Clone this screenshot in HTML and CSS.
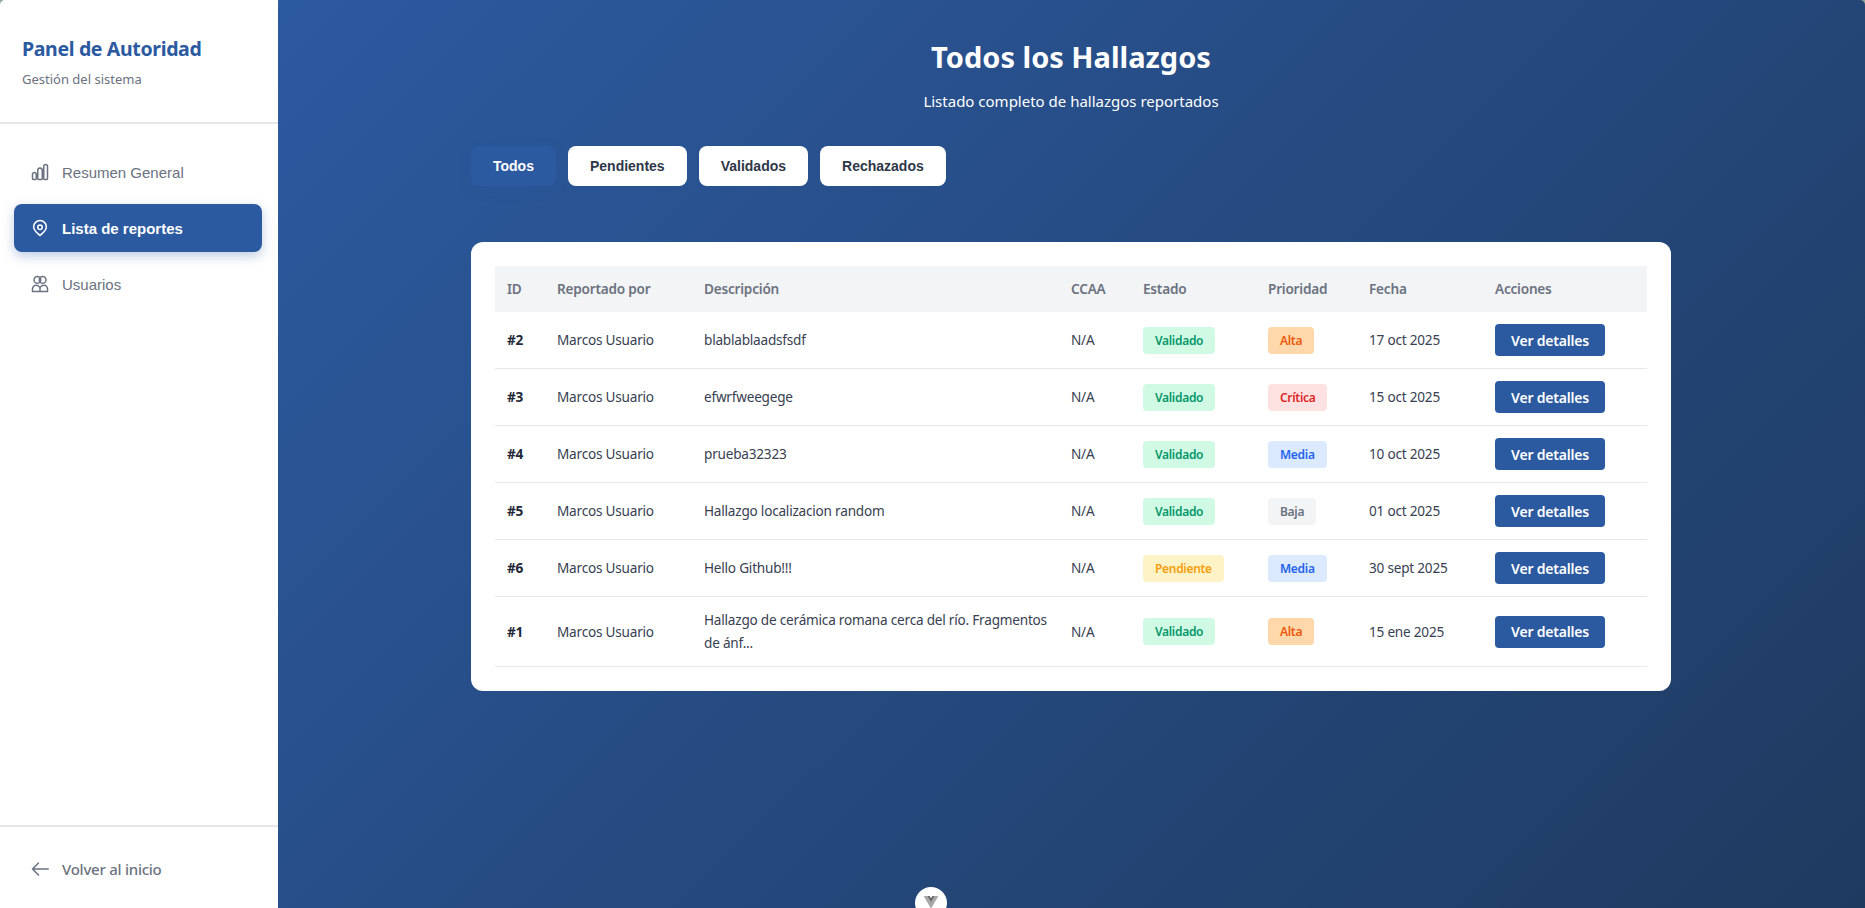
FILE: index.html
```html
<!DOCTYPE html>
<html lang="es">
<head>
    <meta charset="UTF-8">
    <meta name="viewport" content="width=device-width, initial-scale=1.0">
    <title>Todos los Hallazgos</title>
    <link rel="stylesheet" href="styles.css">
</head>
<body>
    <div class="layout">
        <!-- Sidebar -->
        <aside class="sidebar">
            <div class="sidebar-header">
                <h2>Panel de Autoridad</h2>
                <p>Gestión del sistema</p>
            </div>
            <nav class="sidebar-nav">
                <a class="nav-item" href="#">
                    <svg class="nav-icon" viewBox="0 0 24 24"><path d="M2 15a2.500 2.500 0 0 1 5 0v5.500a1.500 1.500 0 0 1-1.500 1.500h-2A1.500 1.500 0 0 1 2 20.500zM9 9.500a3 3 0 0 1 6 0v11a1.500 1.500 0 0 1-1.500 1.500h-3A1.500 1.500 0 0 1 9 20.500zM17 4.500a2.500 2.500 0 0 1 5 0v16a1.500 1.500 0 0 1-1.500 1.500h-2a1.500 1.500 0 0 1-1.500-1.500z"/></svg>
                    Resumen General
                </a>
                <a class="nav-item active" href="#">
                    <svg class="nav-icon" viewBox="0 0 24 24"><circle cx="12" cy="11" r="3"/><path d="M12 2a8.500 8.500 0 0 1 8.500 8.500c0 4.500-4 7.500-8.500 11.500c-4.500-4-8.500-7-8.500-11.500A8.500 8.500 0 0 1 12 2z"/></svg>
                    Lista de reportes
                </a>
                <a class="nav-item" href="#">
                    <svg class="nav-icon" viewBox="0 0 24 24"><circle cx="8.500" cy="6.500" r="4.500"/><circle cx="15.500" cy="6.500" r="4.500"/><path d="M2 22v-3.500a5 5 0 0 1 5-5c2.500 0 4 1.500 5 3.500c1-2 2.500-3.500 5-3.500a5 5 0 0 1 5 5V22zM12 16.500V22"/></svg>
                    Usuarios
                </a>
            </nav>
            <div class="sidebar-footer">
                <a class="back-link" href="#">
                    <svg class="nav-icon" viewBox="0 0 24 24"><path d="M23 12H2M10 4l-8 8 8 8"/></svg>
                    Volver al inicio
                </a>
            </div>
        </aside>

        <!-- Main content -->
        <main class="main">
            <div class="container">
                <header class="page-header">
                    <h1>Todos los Hallazgos</h1>
                    <p>Listado completo de hallazgos reportados</p>
                </header>

                <div class="filters">
                    <button class="filter-btn active">Todos</button>
                    <button class="filter-btn">Pendientes</button>
                    <button class="filter-btn">Validados</button>
                    <button class="filter-btn">Rechazados</button>
                </div>

                <section class="card">
                    <table class="reports">
                        <colgroup>
                            <col class="col-id"><col class="col-user"><col class="col-desc"><col class="col-ccaa">
                            <col class="col-state"><col class="col-prio"><col class="col-date"><col>
                        </colgroup>
                        <thead>
                            <tr>
                                <th>ID</th><th>Reportado por</th><th>Descripción</th><th>CCAA</th>
                                <th>Estado</th><th>Prioridad</th><th>Fecha</th><th>Acciones</th>
                            </tr>
                        </thead>
                        <tbody>
                            <tr>
                                <td class="id">#2</td><td>Marcos Usuario</td><td class="desc">blablablaadsfsdf</td><td>N/A</td>
                                <td><span class="badge validado">Validado</span></td>
                                <td><span class="badge alta">Alta</span></td>
                                <td>17 oct 2025</td>
                                <td><button class="details-btn">Ver detalles</button></td>
                            </tr>
                            <tr>
                                <td class="id">#3</td><td>Marcos Usuario</td><td class="desc">efwrfweegege</td><td>N/A</td>
                                <td><span class="badge validado">Validado</span></td>
                                <td><span class="badge critica">Crítica</span></td>
                                <td>15 oct 2025</td>
                                <td><button class="details-btn">Ver detalles</button></td>
                            </tr>
                            <tr>
                                <td class="id">#4</td><td>Marcos Usuario</td><td class="desc">prueba32323</td><td>N/A</td>
                                <td><span class="badge validado">Validado</span></td>
                                <td><span class="badge media">Media</span></td>
                                <td>10 oct 2025</td>
                                <td><button class="details-btn">Ver detalles</button></td>
                            </tr>
                            <tr>
                                <td class="id">#5</td><td>Marcos Usuario</td><td class="desc">Hallazgo localizacion random</td><td>N/A</td>
                                <td><span class="badge validado">Validado</span></td>
                                <td><span class="badge baja">Baja</span></td>
                                <td>01 oct 2025</td>
                                <td><button class="details-btn">Ver detalles</button></td>
                            </tr>
                            <tr>
                                <td class="id">#6</td><td>Marcos Usuario</td><td class="desc">Hello Github!!!</td><td>N/A</td>
                                <td><span class="badge pendiente">Pendiente</span></td>
                                <td><span class="badge media">Media</span></td>
                                <td>30 sept 2025</td>
                                <td><button class="details-btn">Ver detalles</button></td>
                            </tr>
                            <tr>
                                <td class="id">#1</td><td>Marcos Usuario</td><td class="desc">Hallazgo de cerámica romana cerca del río. Fragmentos de ánf...</td><td>N/A</td>
                                <td><span class="badge validado">Validado</span></td>
                                <td><span class="badge alta">Alta</span></td>
                                <td>15 ene 2025</td>
                                <td><button class="details-btn">Ver detalles</button></td>
                            </tr>
                        </tbody>
                    </table>
                </section>
            </div>
        </main>
    </div>

    <!-- Floating devtools button -->
    <div class="devtools-btn">
        <svg viewBox="0 0 24 24"><path class="logo-outer" d="M1 3h5.500L12 12.500 17.500 3H23L12 22z"/><path class="logo-inner" d="M6.500 3h3.500l2 3.500L14 3h3.500L12 12.500z"/></svg>
    </div>
</body>
</html>
```
FILE: styles.css
```css
* {
    box-sizing: border-box;
}
html, body {
    height: 100%;
}
body {
    margin: 0;
    background: #8fa89a;
    font-family: "Noto Sans", "Liberation Sans", sans-serif;
    color: #1f2937;
    overflow: hidden;
}
.layout {
    display: flex;
    height: 100%;
    border-radius: 5px 5px 0 0;
    overflow: hidden;
}

/* Sidebar */
.sidebar {
    width: 278px;
    flex-shrink: 0;
    background: #fff;
    display: flex;
    flex-direction: column;
}
.sidebar-header {
    height: 124px;
    padding: 36px 22px 0;
    border-bottom: 2px solid #e5e7eb;
}
.sidebar-header h2 {
    margin: 0;
    font-size: 19.5px;
    line-height: 26px;
    font-weight: 700;
    letter-spacing: -0.35px;
    color: #2c5aa0;
}
.sidebar-header p {
    margin: 8px 0 0;
    font-size: 13px;
    line-height: 18px;
    color: #6b7280;
}
.sidebar-nav {
    flex: 1;
    padding: 24px 16px 24px 14px;
    display: flex;
    flex-direction: column;
    gap: 8px;
}
.nav-item {
    display: flex;
    align-items: center;
    gap: 13px;
    height: 48px;
    padding: 0 17px;
    border-radius: 8px;
    font-family: "Liberation Sans", Arial, sans-serif;
    font-size: 15px;
    color: #6b7280;
    text-decoration: none;
}
.nav-item.active {
    background: #2c5aa0;
    color: #fff;
    font-weight: 700;
    box-shadow: 0 4px 12px rgba(44, 90, 160, 0.3);
}
.nav-icon {
    width: 18px;
    height: 18px;
    flex-shrink: 0;
    fill: none;
    stroke: currentColor;
    stroke-width: 2;
    stroke-linecap: round;
    stroke-linejoin: round;
}
.sidebar-footer {
    height: 83px;
    padding: 20px 14px 0;
    border-top: 2px solid #e5e7eb;
}
.back-link {
    display: flex;
    align-items: center;
    gap: 13px;
    height: 44px;
    padding: 0 17px;
    font-size: 15px;
    font-weight: 500;
    letter-spacing: -0.25px;
    color: #6b7280;
    text-decoration: none;
}

/* Main area */
.main {
    flex: 1;
    padding-right: 1px;
    background: linear-gradient(135deg, #2c5aa0 0%, #1e3a5f 100%);
}
.container {
    width: 1200px;
    margin: 0 auto;
}
.page-header {
    padding-top: 37px;
    text-align: center;
    color: #fff;
}
.page-header h1 {
    margin: 0;
    font-size: 29px;
    line-height: 40px;
    font-weight: 700;
}
.page-header p {
    margin: 13px 0 0;
    font-size: 15px;
    line-height: 22px;
}
.filters {
    display: flex;
    gap: 12px;
    margin-top: 34px;
}
.filter-btn {
    height: 40px;
    padding: 0 22px;
    border: none;
    border-radius: 8px;
    background: #fff;
    color: #2d3748;
    font-family: "Liberation Sans", Arial, sans-serif;
    font-size: 14px;
    font-weight: 700;
    cursor: pointer;
}
.filter-btn.active {
    background: #2c5aa0;
    color: #fff;
    box-shadow: 0 4px 12px rgba(44, 90, 160, 0.3);
}

/* Table card */
.card {
    margin-top: 56px;
    padding: 24px;
    background: #fff;
    border-radius: 12px;
}
.reports {
    width: 100%;
    table-layout: fixed;
    border-collapse: separate;
    border-spacing: 0;
    font-size: 13.6px;
    line-height: 22.4px;
    letter-spacing: -0.22px;
}
.col-id { width: 50px; }
.col-user { width: 147px; }
.col-desc { width: 367px; }
.col-ccaa { width: 72px; }
.col-state { width: 125px; }
.col-prio { width: 101px; }
.col-date { width: 126px; }
.reports th {
    padding: 12px;
    background: #f3f4f6;
    color: #6b7280;
    font-weight: 600;
    text-align: left;
}
.reports td {
    padding: 12px;
    border-bottom: 1px solid #e5e7eb;
    color: #374151;
}
.reports td.id {
    font-weight: 700;
    color: #1f2937;
}
.reports td.desc {
    padding-right: 4px;
}
.badge {
    display: inline-block;
    padding: 4px 12px;
    border-radius: 4px;
    font-size: 12px;
    line-height: 19.2px;
    font-weight: 600;
    letter-spacing: -0.3px;
    vertical-align: middle;
}
.validado { background: #d1fae5; color: #059669; }
.pendiente { background: #fef3c7; color: #f59e0b; }
.alta { background: #fed7aa; color: #ea580c; }
.critica { background: #fee2e2; color: #dc2626; }
.media { background: #dbeafe; color: #2563eb; }
.baja { background: #f3f4f6; color: #6b7280; }
.details-btn {
    display: block;
    width: 110px;
    height: 32px;
    padding: 0;
    border: none;
    border-radius: 4px;
    background: #2c5aa0;
    color: #fff;
    font-family: "Noto Sans", sans-serif;
    font-size: 14px;
    font-weight: 600;
    letter-spacing: -0.2px;
    cursor: pointer;
}

/* Sits over the page, half off the bottom edge */
.devtools-btn {
    position: fixed;
    left: 915px;
    top: 887px;
    width: 32px;
    height: 32px;
    border-radius: 50%;
    background: #fff;
    display: flex;
    justify-content: center;
    padding-top: 7px;
}
.devtools-btn svg {
    width: 16px;
    height: 16px;
}
.logo-outer { fill: #a8a8a8; }
.logo-inner { fill: #666; }
```
